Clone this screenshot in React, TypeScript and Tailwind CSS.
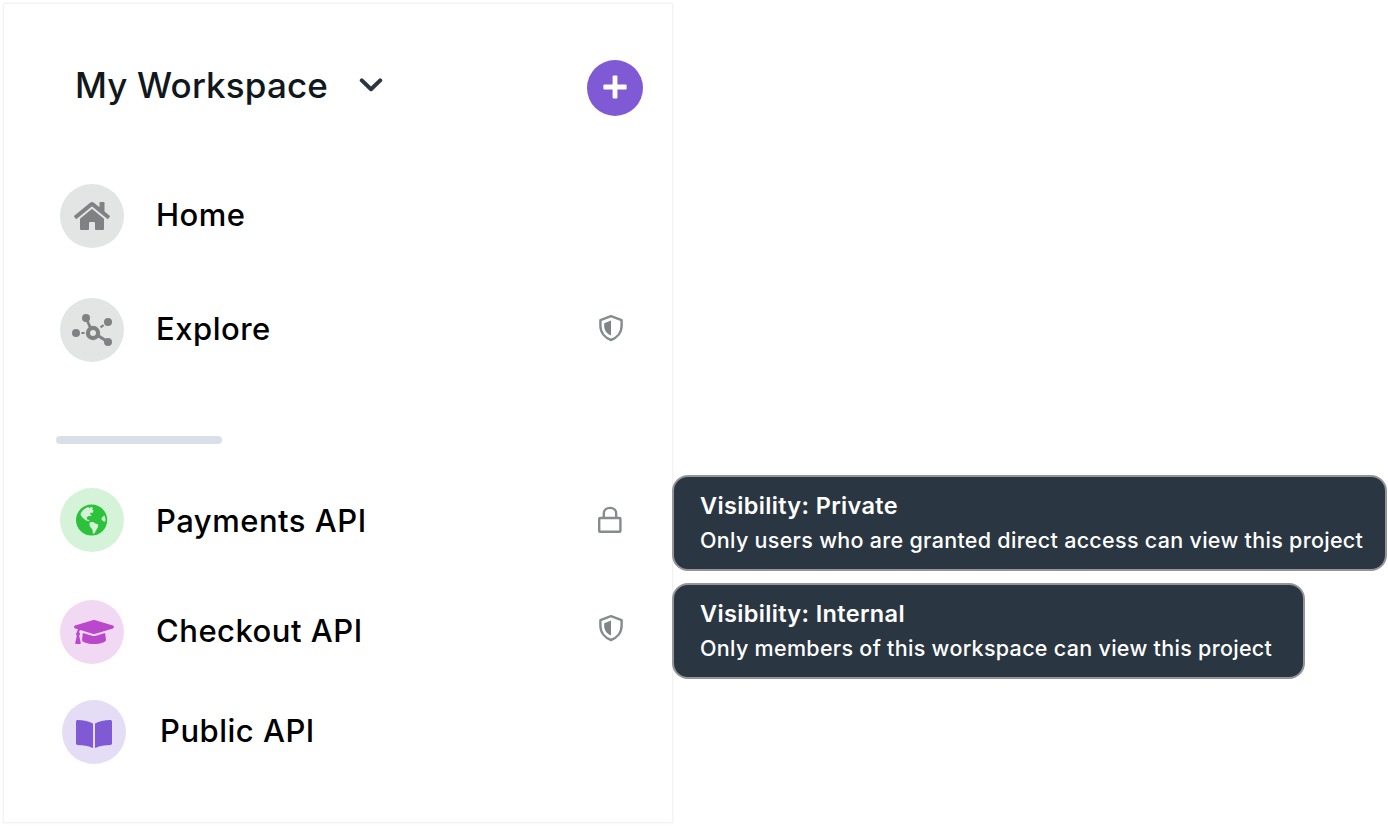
import type { ReactNode } from "react";
import { FaHome, FaGraduationCap } from "react-icons/fa";

function ShieldIcon() {
  return (
    <svg viewBox="0 0 26 28" className="mt-[-4px] h-7 w-[26px]" fill="none">
      <path
        d="M13 2.2 L23.6 6.2 V11.8 C23.6 18.6 19.2 23.8 13 26 C6.8 23.8 2.4 18.6 2.4 11.8 V6.2 Z"
        stroke="#868b8e"
        strokeWidth="2.4"
        strokeLinejoin="round"
      />
      <path d="M13 6.6 L6.2 9.2 V12.6 C6.4 16.6 9 20 13 21.6 Z" fill="#7f8487" />
    </svg>
  );
}

function LockIcon() {
  return (
    <svg viewBox="0 0 24 28" className="mr-[2px] h-7 w-6" fill="none" stroke="#868b8e" strokeWidth="2.4">
      <rect x="1.2" y="12" width="21.2" height="13.8" rx="0.8" />
      <path d="M5.8 12 V7.6 C5.8 4.2 8.4 1.9 12 1.9 C15.6 1.9 18.2 4.2 18.2 7.6 V12" />
    </svg>
  );
}

function NetworkIcon() {
  return (
    <svg viewBox="0 0 64 64" className="size-16" fill="#7f8182">
      <g stroke="#7f8182" strokeWidth="2.8">
        <path d="M26 20 L31 31" />
        <path d="M34 35 L48 44" strokeWidth="3.2" />
        <path d="M21.4 35 H24.6" strokeWidth="2" />
        <path d="M40.5 29.4 L43.6 27.2" strokeWidth="2.2" />
      </g>
      <circle cx="26" cy="20" r="4" />
      <circle cx="48" cy="24" r="4" />
      <circle cx="16" cy="35" r="4" />
      <circle cx="48" cy="44" r="4" />
      <circle cx="33" cy="35" r="7.2" />
      <circle cx="33" cy="35" r="3" fill="#e3e5e4" />
    </svg>
  );
}

function GlobeIcon() {
  return (
    <svg viewBox="0 0 64 64" className="size-16">
      <circle cx="31.6" cy="32" r="15.6" fill="#2cc23b" />
      <g fill="#d5f3d8">
        <path d="M20.4 26.4 C22 22.6 24.6 20.2 28.2 19 L29.6 20.2 L31.2 18.8 L33 20 L32.2 21.6 L33.6 22.6 L32.6 25 L30.6 24.6 L30.2 26.2 L31.8 28 L28.6 28 L26.6 29.6 L27.2 31.4 L29 32 L29.6 33.2 L26 32.6 L22.4 29.6 Z" />
        <path d="M29.4 34.8 C31.4 33.4 33.6 33.8 35 35.2 L38.2 36.4 C38.6 38.8 36.8 40.8 36 42.6 L34.4 45.6 L33 45.8 L32.4 41.4 L29.8 38.2 Z" />
        <path d="M42 29.4 L44.2 27.4 C45.4 29 45.7 31.4 45.2 33.8 L42.8 33 L41.4 31 Z" />
      </g>
    </svg>
  );
}

function BookIcon() {
  return (
    <svg viewBox="0 0 64 64" className="size-16" fill="#805ad5">
      <path d="M31 23.4 C27 21.2 21.4 20.2 15.8 20 C14.8 20 14 20.7 14 21.6 V43.6 C14 44.4 14.7 45 15.6 45.1 C21 45.4 26.6 46 30 47.8 C30.5 48 31 47.8 31 47.2 Z" />
      <path d="M33 23.4 C37 21.2 42.6 20.2 48.2 20 C49.2 20 50 20.7 50 21.6 V43.6 C50 44.4 49.3 45 48.4 45.1 C43 45.4 37.4 46 34 47.8 C33.5 48 33 47.8 33 47.2 Z" />
    </svg>
  );
}

function Tooltip({ title, text, box }: { title: string; text: string; box: string }) {
  return (
    <div
      role="tooltip"
      className={`absolute left-[668px] h-24 whitespace-nowrap rounded-2xl border-2 border-[#949596] bg-[#2a3742] pl-[26px] pt-[12px] text-white ${box}`}
    >
      <p className="text-[23.5px] font-semibold leading-[34px] tracking-[0.35px]">{title}</p>
      <p className="text-[21.5px] font-medium leading-[34px] tracking-[0.3px]">{text}</p>
    </div>
  );
}

type RowProps = { label: string; spacing: string; bubble: string; icon: ReactNode; labelClass: string; badge?: ReactNode; tooltip?: ReactNode };

function Row({ label, spacing, bubble, icon, labelClass, badge, tooltip }: RowProps) {
  return (
    <li className={`relative flex h-16 items-center ${spacing}`}>
      <span className={`flex size-16 shrink-0 items-center justify-center rounded-full ${bubble}`}>{icon}</span>
      <span className={`flex-1 text-[31px] font-medium leading-10 tracking-[0.5px] text-black ${labelClass}`}>{label}</span>
      {badge}
      {tooltip}
    </li>
  );
}

export default function App() {
  return (
    <div className="h-[826px] w-[1388px] overflow-hidden bg-white pl-[3px] pt-[3px] font-['Inter',sans-serif]">
      <aside className="h-[820px] w-[670px] border border-[#f3f3f3] bg-white shadow-[0_0_2px_#f0f0f0]">
        <header className="flex h-28 items-end justify-between pl-[71px] pr-[29px]">
          <button className="flex items-center pb-1">
            <span className="w-[284px] text-left text-[35px] font-medium leading-[54px] tracking-[0.15px] text-[#11181c]">My Workspace</span>
            <svg viewBox="0 0 24 16" className="mt-[-1px] h-4 w-6" fill="none" stroke="#2a3742" strokeWidth="4" strokeLinecap="round" strokeLinejoin="round">
              <path d="M2.8 3.4 L12 12.2 L21.2 3.4" />
            </svg>
          </button>
          <button className="flex size-14 items-center justify-center rounded-full bg-[#805ad5]">
            <svg viewBox="0 0 24 24" className="mt-[-2px] size-6" fill="white">
              <rect x="0.4" y="9.6" width="23.2" height="4.8" rx="1" />
              <rect x="9.6" y="0.4" width="4.8" height="23.2" rx="1" />
            </svg>
          </button>
        </header>
        <ul className="mt-[68px]">
          <Row label="Home" spacing="pl-14" bubble="bg-[#e3e5e4]" icon={<FaHome className="size-9 text-[#7f8182]" />} labelClass="pl-8 mt-[-2px]" />
          <Row label="Explore" spacing="mt-[50px] pl-14 pr-12" bubble="bg-[#e3e5e4]" icon={<NetworkIcon />} labelClass="pl-8 mt-[-2px]" badge={<ShieldIcon />} />
        </ul>
        <hr className="ml-[52px] mt-[74px] h-2 w-[166px] rounded border-0 bg-[#d9e0e8]" />
        <ul className="mt-[44px]">
          <Row label="Payments API" spacing="pl-14 pr-12" bubble="bg-[#d5f3d8]" icon={<GlobeIcon />} labelClass="pl-8 mt-[2px]" badge={<LockIcon />}
            tooltip={<Tooltip title="Visibility: Private" text="Only users who are granted direct access can view this project" box="top-[-13px] w-[715px]" />} />
          <Row label="Checkout API" spacing="mt-12 pl-14 pr-12" bubble="bg-[#f1d9f3]" icon={<FaGraduationCap className="ml-1 size-10 text-[#ba48cc]" />} labelClass="pl-8 mt-[-2px]" badge={<span className="-mt-1"><ShieldIcon /></span>}
            tooltip={<Tooltip title="Visibility: Internal" text="Only members of this workspace can view this project" box="top-[-17px] w-[633px]" />} />
          <Row label="Public API" spacing="mt-9 pl-[58px]" bubble="bg-[#e5ddf6]" icon={<BookIcon />} labelClass="pl-[34px] mt-[-2px]" />
        </ul>
      </aside>
    </div>
  );
}
